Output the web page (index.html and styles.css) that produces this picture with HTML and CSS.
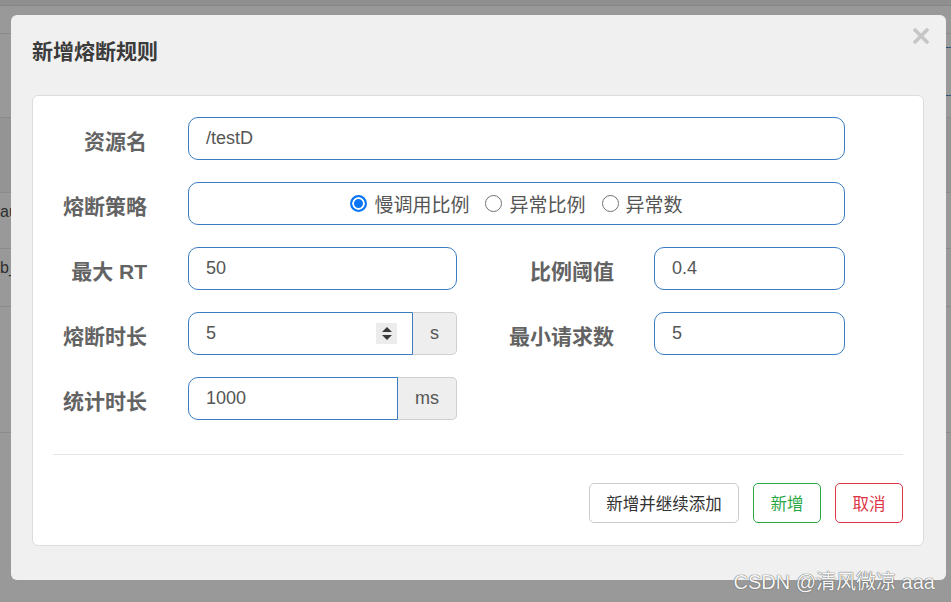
FILE: index.html
```html
<!DOCTYPE html>
<html lang="zh-CN">
<head>
<meta charset="utf-8">
<title>新增熔断规则</title>
<link rel="stylesheet" href="styles.css">
</head>
<body>
<div class="page">
  <div class="pg-top"></div>
  <div class="pg-nav"></div>
  <div class="pg-search"><div class="pg-box"></div></div>
  <div class="pg-head"></div>
  <div class="pg-row"><span class="pg-cell">au</span></div>
  <div class="pg-row pg-row2"><span class="pg-cell">b_</span></div>
  <div class="pg-row pg-row3"></div>
</div>

<div class="modal">
  <div class="modal-header">
    <h4 class="modal-title">新增熔断规则</h4>
    <svg class="close" width="16" height="16" viewBox="0 0 16 16" aria-label="关闭">
      <path d="M2.2 2.2 L13.8 13.8 M13.8 2.2 L2.2 13.8" stroke="#c6c6c6" stroke-width="3.6" stroke-linecap="square" fill="none"/>
    </svg>
  </div>

  <div class="panel">
    <div class="form">
      <div class="row">
        <label class="lbl">资源名</label>
        <div class="field w-full">/testD</div>
      </div>

      <div class="row">
        <label class="lbl">熔断策略</label>
        <div class="field w-full radios">
          <span class="radio"><span class="dot checked"></span>慢调用比例</span>
          <span class="radio"><span class="dot"></span>异常比例</span>
          <span class="radio"><span class="dot"></span>异常数</span>
        </div>
      </div>

      <div class="row">
        <label class="lbl">最大 RT</label>
        <div class="field w-half">50</div>
        <label class="lbl lbl-right">比例阈值</label>
        <div class="field w-right">0.4</div>
      </div>

      <div class="row">
        <label class="lbl">熔断时长</label>
        <div class="group">
          <div class="field grp-field spin-field">
            <span>5</span>
            <span class="spin"><span class="tri-up"></span><span class="tri-down"></span></span>
          </div>
          <div class="addon addon-s">s</div>
        </div>
        <label class="lbl lbl-right">最小请求数</label>
        <div class="field w-right">5</div>
      </div>

      <div class="row">
        <label class="lbl">统计时长</label>
        <div class="group">
          <div class="field grp-field">1000</div>
          <div class="addon addon-ms">ms</div>
        </div>
      </div>
    </div>

    <hr class="divider">

    <div class="actions">
      <button class="btn btn-wide">新增并继续添加</button>
      <button class="btn btn-ok">新增</button>
      <button class="btn btn-cancel">取消</button>
    </div>
  </div>
</div>

<div class="watermark">CSDN @清风微凉 aaa</div>
</body>
</html>
```

FILE: styles.css
```css
html, body {
  margin: 0;
  height: 100%;
}

body {
  position: relative;
  overflow: hidden;
  background: #999;
  font-family: "Liberation Sans", "Noto Sans CJK SC", sans-serif;
}

/* ---------- dimmed page behind the modal ---------- */
.page {
  display: flex;
  flex-direction: column;
}

.pg-top {
  height: 5px;
  background: #8f8f8f;
  border-bottom: 1px solid #868686;
}

.pg-nav {
  height: 27px;
  border-bottom: 1px solid #8b8b8b;
}

.pg-search {
  height: 83px;
  border-bottom: 1px solid #8b8b8b;
  display: flex;
  justify-content: flex-end;
}

.pg-box {
  margin-top: 13px;
  margin-right: -40px;
  width: 50px;
  height: 47px;
  border-top: 1px solid #35567c;
  border-bottom: 1px solid #35567c;
}

.pg-head {
  height: 74px;
  background: #949494;
  border-bottom: 1px solid #8b8b8b;
}

.pg-row {
  height: 55px;
  border-bottom: 1px solid #8b8b8b;
}

.pg-row2 {
  height: 57px;
}

.pg-row3 {
  height: 125px;
}

.pg-cell {
  display: block;
  padding-top: 9px;
  font-size: 16px;
  line-height: 20px;
  color: #2e2e2e;
}

/* ---------- modal ---------- */
.modal {
  position: absolute;
  left: 11px;
  top: 15px;
  width: 935px;
  height: 565px;
  box-sizing: border-box;
  padding: 0 22px 0 21px;
  background: #f0f0f0;
  border-radius: 6px;
}

.modal-header {
  position: relative;
  height: 80px;
}

.modal-title {
  margin: 0;
  padding-top: 22px;
  font-size: 21px;
  line-height: 30px;
  font-weight: bold;
  color: #3b3b3b;
}

.close {
  position: absolute;
  right: -5px;
  top: 13px;
}

.panel {
  background: #fff;
  border: 1px solid #dcdcdc;
  border-radius: 6px;
  padding: 21px 0 22px;
}

.form {
  display: flex;
  flex-direction: column;
  gap: 22px;
}

.row {
  display: flex;
  height: 43px;
}

.lbl {
  flex: none;
  width: 114px;
  margin-right: 41px;
  text-align: right;
  white-space: nowrap;
  font-size: 21px;
  line-height: 50px;
  font-weight: bold;
  color: #636363;
}

.lbl-right {
  width: 157px;
  margin-right: 40px;
}

.field {
  flex: none;
  box-sizing: border-box;
  height: 43px;
  display: flex;
  align-items: center;
  padding: 0 17px;
  border: 1px solid #3a7dc2;
  border-radius: 10px;
  background: #fff;
  font-size: 18px;
  color: #555;
}

.w-full {
  width: 657px;
}

.w-half {
  width: 269px;
}

.w-right {
  width: 191px;
}

/* radios */
.radios {
  justify-content: center;
  gap: 16px;
  font-size: 19px;
  color: #555;
}

.radio {
  display: flex;
  align-items: center;
}

.dot {
  width: 17px;
  height: 17px;
  box-sizing: border-box;
  margin-right: 7px;
  border: 1px solid #737373;
  border-radius: 50%;
  background: #fff;
}

.dot.checked {
  border: 2px solid #0a76f6;
  background: #0a76f6;
  box-shadow: inset 0 0 0 2px #fff;
}

/* input groups */
.group {
  flex: none;
  display: flex;
  width: 269px;
  height: 43px;
}

.grp-field {
  flex: 1;
  border-radius: 10px 0 0 10px;
}

.spin-field {
  justify-content: space-between;
  padding-right: 15px;
}

.spin {
  width: 21px;
  height: 21px;
  background: #ececec;
  display: flex;
  flex-direction: column;
  align-items: center;
  justify-content: center;
  gap: 3px;
}

.tri-up {
  width: 0;
  height: 0;
  border-left: 5px solid transparent;
  border-right: 5px solid transparent;
  border-bottom: 5px solid #3a3a3a;
}

.tri-down {
  width: 0;
  height: 0;
  border-left: 5px solid transparent;
  border-right: 5px solid transparent;
  border-top: 5px solid #3a3a3a;
}

.addon {
  flex: none;
  box-sizing: border-box;
  display: flex;
  align-items: center;
  justify-content: center;
  border: 1px solid #cfcfcf;
  border-left: none;
  border-radius: 0 5px 5px 0;
  background: #eee;
  font-size: 18px;
  color: #555;
}

.addon-s {
  width: 44px;
}

.addon-ms {
  width: 59px;
}

/* footer */
.divider {
  margin: 34px 20px 0;
  height: 0;
  border: none;
  border-top: 1px solid #e5e5e5;
}

.actions {
  display: flex;
  justify-content: flex-end;
  gap: 14px;
  margin: 28px 20px 0;
}

.btn {
  box-sizing: border-box;
  height: 40px;
  width: 68px;
  padding: 0;
  border: 1px solid #ccc;
  border-radius: 5px;
  background: #fff;
  font-family: "Liberation Sans", "Noto Sans CJK SC", sans-serif;
  font-size: 16.5px;
  color: #333;
}

.btn-wide {
  width: 150px;
}

.btn-ok {
  border-color: #2aa745;
  color: #2aa745;
}

.btn-cancel {
  border-color: #dc3545;
  color: #dc3545;
}

/* watermark */
.watermark {
  position: absolute;
  right: 16px;
  top: 570px;
  font-size: 20px;
  line-height: 24px;
  color: #f6f6f6;
  text-shadow: 0 0 1px #5a5a5a, 0 0 1px #5a5a5a;
  white-space: nowrap;
}
```
